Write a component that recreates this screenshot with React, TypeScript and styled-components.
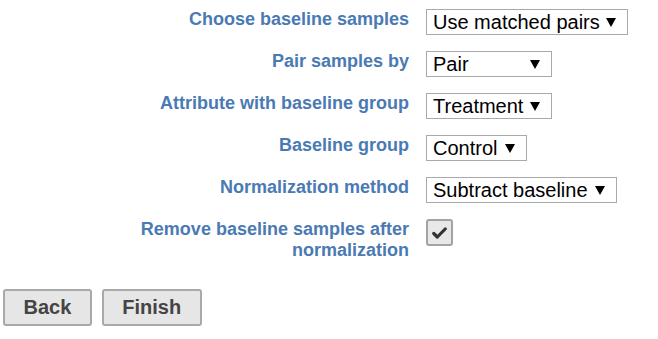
import React from 'react';
import styled, { createGlobalStyle } from 'styled-components';

const GlobalStyle = createGlobalStyle`
  html, body {
    margin: 0;
    padding: 0;
    background: #ffffff;
    font-family: 'Liberation Sans', Arial, sans-serif;
  }
`;

const Page = styled.div`
  width: 658px;
  height: 339px;
  padding-top: 9px;
  box-sizing: border-box;
  overflow: hidden;
`;

const Form = styled.div`
  display: grid;
  grid-template-columns: 272px auto;
  column-gap: 17px;
  row-gap: 16px;
  margin-left: 137px;
  align-items: start;
`;

const Label = styled.div`
  font-size: 18px;
  line-height: 21px;
  font-weight: 700;
  color: #4a7ab3;
  text-align: right;
`;

const Select = styled.div<{ width: number }>`
  width: ${(p) => p.width}px;
  height: 26px;
  box-sizing: border-box;
  border: 1px solid #a9a9a9;
  background: #ffffff;
  display: flex;
  align-items: center;
  justify-content: space-between;
  padding: 0 11px 0 6px;
  font-size: 20px;
  line-height: 24px;
  color: #000000;
  cursor: pointer;
`;

const Arrow = styled.svg`
  width: 10px;
  height: 9px;
  flex: none;
`;

const Checkbox = styled.div`
  width: 27px;
  height: 27px;
  box-sizing: border-box;
  border: 2px solid #a3a3a3;
  border-radius: 3px;
  background: #e8e8e8;
  display: flex;
  align-items: center;
  justify-content: center;
`;

const Actions = styled.div`
  display: flex;
  gap: 10px;
  margin: 28px 0 0 3px;
`;

const Button = styled.button`
  height: 37px;
  box-sizing: border-box;
  padding: 0 18.5px;
  border: 2px solid #a9a9a9;
  border-radius: 3px;
  background: #e6e6e6;
  color: #444444;
  font-family: 'Liberation Sans', Arial, sans-serif;
  font-size: 20px;
  font-weight: 700;
  line-height: 23px;
  cursor: pointer;
`;

const Dropdown = ({ value, width }: { value: string; width: number }) => (
  <Select width={width}>
    <span>{value}</span>
    <Arrow viewBox="0 0 10 9">
      <polygon points="0,0 10,0 5,9" fill="#000" />
    </Arrow>
  </Select>
);

const rows = [
  { label: 'Choose baseline samples', value: 'Use matched pairs', width: 202 },
  { label: 'Pair samples by', value: 'Pair', width: 126 },
  { label: 'Attribute with baseline group', value: 'Treatment', width: 126 },
  { label: 'Baseline group', value: 'Control', width: 101 },
  { label: 'Normalization method', value: 'Subtract baseline', width: 191 },
];

const App = () => (
  <Page>
    <GlobalStyle />
    <Form>
      {rows.map((r) => (
        <React.Fragment key={r.label}>
          <Label>{r.label}</Label>
          <Dropdown value={r.value} width={r.width} />
        </React.Fragment>
      ))}
      <Label>Remove baseline samples after normalization</Label>
      <Checkbox>
        <svg width="15" height="12" viewBox="0 0 15 12">
          <path d="M1.8 6.5 L5.3 10 L13.2 2" fill="none" stroke="#333333" strokeWidth="3.2" strokeLinecap="round" strokeLinejoin="round" />
        </svg>
      </Checkbox>
    </Form>
    <Actions>
      <Button>Back</Button>
      <Button>Finish</Button>
    </Actions>
  </Page>
);

export default App;
